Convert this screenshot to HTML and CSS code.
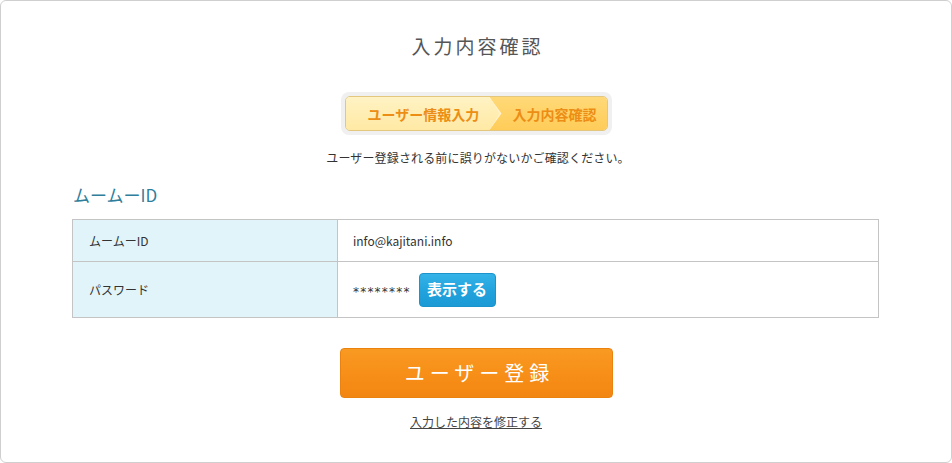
FILE: index.html
```html
<!DOCTYPE html>
<html lang="ja">
<head>
<meta charset="utf-8">
<title>入力内容確認</title>
<link rel="stylesheet" href="styles.css">
</head>
<body>
<div class="page">
  <h1 class="title">入力内容確認</h1>
  <div class="steps-wrap">
    <div class="steps">
      <div class="step step-done">ユーザー情報入力</div>
      <div class="step step-current">入力内容確認</div>
    </div>
  </div>
  <p class="lead">ユーザー登録される前に誤りがないかご確認ください。</p>
  <section class="section">
    <h2 class="section-title">ムームーID</h2>
    <table class="info">
      <tr class="row-id">
        <th>ムームーID</th>
        <td>info@kajitani.info</td>
      </tr>
      <tr class="row-pw">
        <th>パスワード</th>
        <td><span class="pw">********</span><button class="btn-show" type="button">表示する</button></td>
      </tr>
    </table>
  </section>
  <div class="actions">
    <button class="btn-submit" type="button">ユーザー登録</button>
    <a class="edit-link" href="#">入力した内容を修正する</a>
  </div>
</div>
</body>
</html>
```
FILE: styles.css
```css
html, body {
  margin: 0;
  padding: 0;
  background: #fff;
}
body {
  font-family: "Noto Sans CJK JP", "Noto Sans", sans-serif;
  color: #333;
}
.page {
  width: 952px;
  height: 463px;
  box-sizing: border-box;
  border: 1px solid #cfcfcf;
  border-radius: 6px;
  display: flex;
  flex-direction: column;
  align-items: center;
}
.title {
  margin: 33px 0 0;
  font-size: 19px;
  line-height: 24px;
  font-weight: normal;
  letter-spacing: 3px;
  padding-left: 3px;
  color: #555;
}
.steps-wrap {
  margin-top: 34px;
  padding: 4px;
  background: #f0f0f0;
  border-radius: 8px;
}
.steps {
  display: flex;
  height: 35px;
  border: 1px solid #e3c77e;
  border-radius: 5px;
  overflow: hidden;
  box-sizing: border-box;
}
.step {
  display: flex;
  align-items: center;
  font-size: 14px;
  font-weight: bold;
  color: #ec8d15;
  position: relative;
}
.step-done {
  width: 144px;
  padding-left: 22px;
  box-sizing: border-box;
  background: linear-gradient(#fff3c4, #ffe9a4);
}
.step-current {
  width: 117px;
  padding-left: 23px;
  box-sizing: border-box;
  background: linear-gradient(#ffd978, #ffcc58);
}
.step-current::before,
.step-current::after {
  content: "";
  position: absolute;
  top: 0;
  left: 0;
  height: 100%;
}
.step-current::before {
  width: 12px;
  background: #fff2cc;
  clip-path: polygon(0 0, 100% 50%, 0 100%);
}
.step-current::after {
  width: 10px;
  background: linear-gradient(#fff1c0, #ffe9a4);
  clip-path: polygon(0 0, 100% 50%, 0 100%);
}
.lead {
  margin: 14px 0 0;
  padding-left: 4px;
  font-size: 12px;
  line-height: 18px;
  letter-spacing: 0.15px;
  color: #333;
}
.section {
  align-self: stretch;
  padding: 0 72px 0 71px;
}
.section-title {
  margin: 17px 0 0 1px;
  font-size: 17px;
  line-height: 22px;
  font-weight: normal;
  color: #2e7e9c;
}
.info {
  margin-top: 13px;
  width: 807px;
  border-collapse: collapse;
  font-size: 12px;
}
.info th, .info td {
  border: 1px solid #c4c4c4;
  text-align: left;
  font-weight: normal;
  vertical-align: middle;
}
.info th {
  width: 265px;
  box-sizing: border-box;
  background: #e1f4f9;
  padding: 0 0 0 16px;
  color: #333;
}
.info td {
  padding: 0 0 0 15px;
  color: #333;
}
.row-id th, .row-id td {
  height: 41px;
}
.row-pw th, .row-pw td {
  height: 55px;
}
.pw {
  display: inline-block;
  font-family: "DejaVu Sans", sans-serif;
  font-size: 12px;
  letter-spacing: 1.2px;
  vertical-align: middle;
  margin-top: 4px;
}
.btn-show {
  display: inline-block;
  vertical-align: middle;
  margin-left: 8px;
  width: 77px;
  height: 34px;
  padding: 0 0 3px;
  border: 1px solid #1d93cc;
  border-radius: 4px;
  background: linear-gradient(#34b3e8, #22a2dc 55%, #1b9ad5);
  color: #fff;
  font-family: "Noto Sans CJK JP", sans-serif;
  font-size: 15px;
  font-weight: bold;
  cursor: pointer;
}
.actions {
  display: flex;
  flex-direction: column;
  align-items: center;
}
.btn-submit {
  margin-top: 30px;
  width: 273px;
  height: 50px;
  border: 1px solid #e9820f;
  border-radius: 4px;
  background: linear-gradient(#f99a22, #f78f18 50%, #f38612);
  color: #fff;
  font-family: "Noto Sans CJK JP", sans-serif;
  font-size: 20px;
  font-weight: normal;
  letter-spacing: 5px;
  padding: 0 0 2px 7px;
  cursor: pointer;
}
.edit-link {
  margin-top: 16px;
  font-size: 12px;
  line-height: 16px;
  color: #444;
  text-decoration: underline;
}
```
